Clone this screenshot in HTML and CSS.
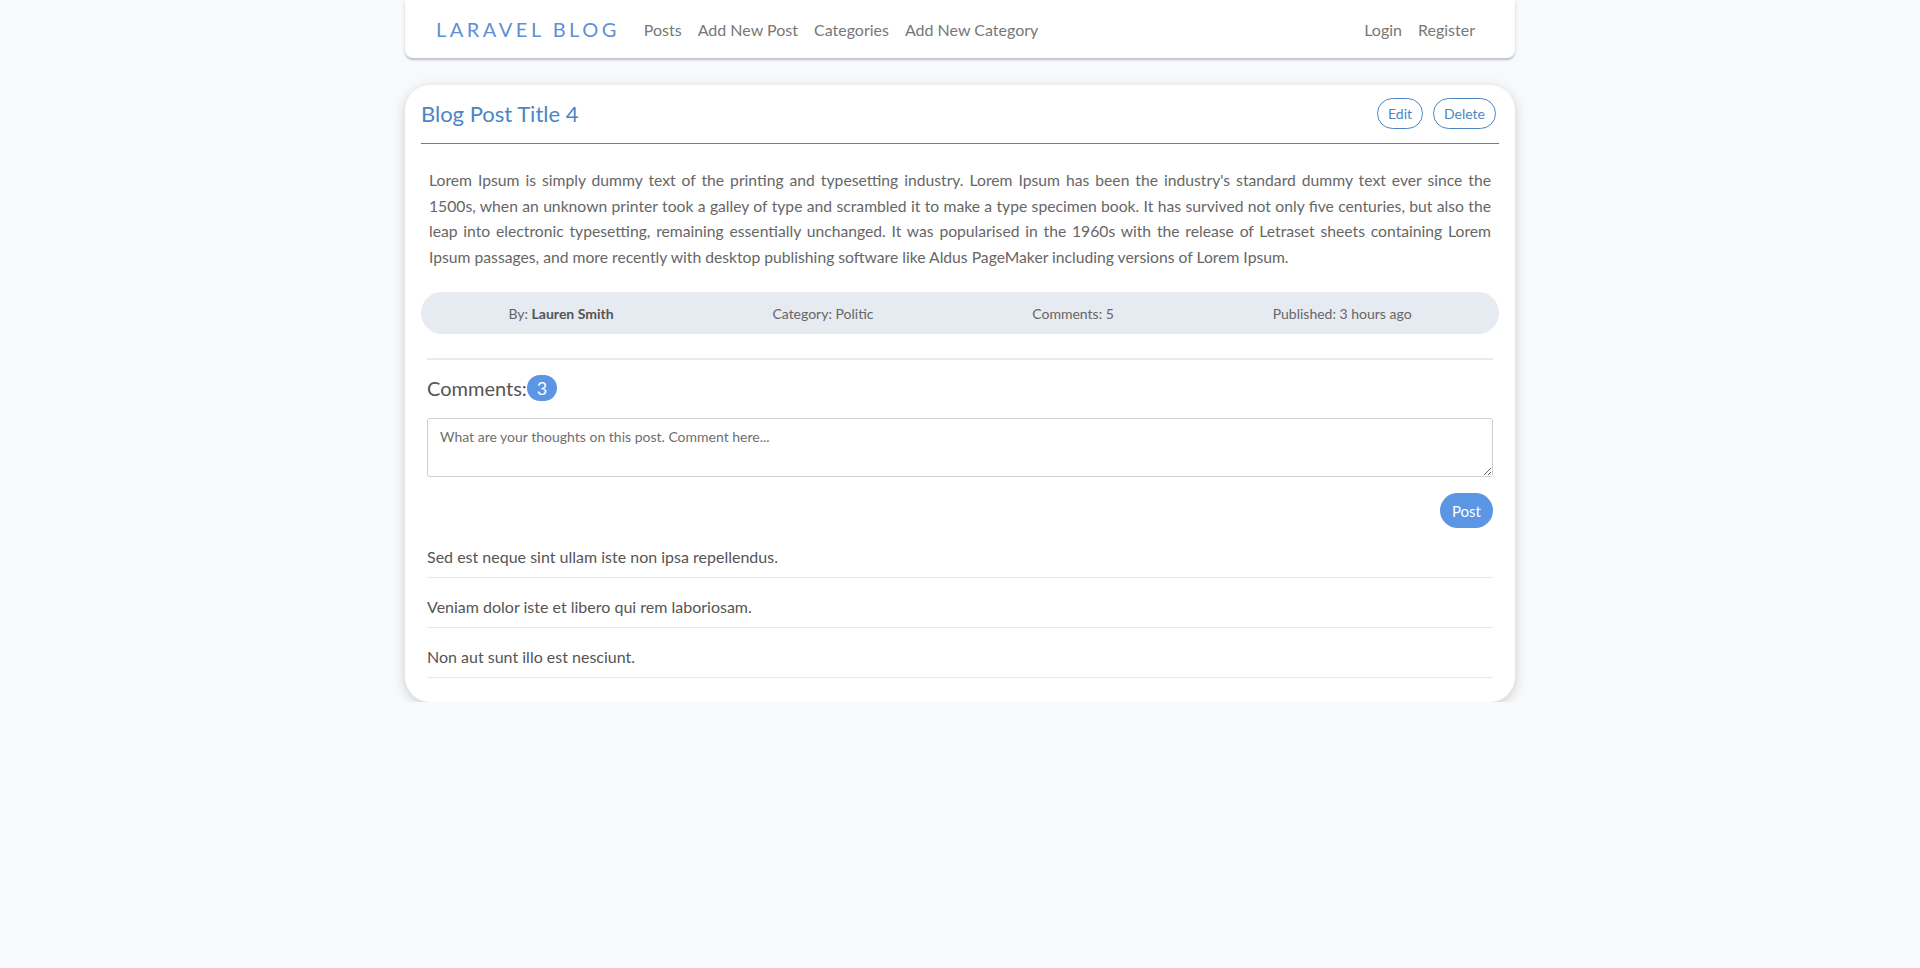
FILE: index.html
```html
<!DOCTYPE html>
<html lang="en">
<head>
<meta charset="utf-8">
<title>Laravel Blog</title>
<link rel="stylesheet" href="styles.css">
</head>
<body>
<div class="container">
  <nav class="navbar">
    <a class="brand" href="#">LARAVEL BLOG</a>
    <ul class="nav">
      <li><a href="#">Posts</a></li>
      <li><a href="#">Add New Post</a></li>
      <li><a href="#">Categories</a></li>
      <li><a href="#">Add New Category</a></li>
    </ul>
    <ul class="nav nav-right">
      <li><a href="#">Login</a></li>
      <li><a href="#">Register</a></li>
    </ul>
  </nav>

  <article class="card">
    <header class="card-header">
      <h1 class="post-title">Blog Post Title 4</h1>
      <div class="actions">
        <button class="btn-outline">Edit</button>
        <button class="btn-outline">Delete</button>
      </div>
    </header>
    <p class="post-body">Lorem Ipsum is simply dummy text of the printing and typesetting industry. Lorem Ipsum has been the industry's standard dummy text ever since the 1500s, when an unknown printer took a galley of type and scrambled it to make a type specimen book. It has survived not only five centuries, but also the leap into electronic typesetting, remaining essentially unchanged. It was popularised in the 1960s with the release of Letraset sheets containing Lorem Ipsum passages, and more recently with desktop publishing software like Aldus PageMaker including versions of Lorem Ipsum.</p>
    <div class="meta">
      <span>By: <strong>Lauren Smith</strong></span>
      <span>Category: Politic</span>
      <span>Comments: 5</span>
      <span>Published: 3 hours ago</span>
    </div>
    <section class="comments">
      <hr class="divider">
      <h2 class="comments-title">Comments: <span class="badge">3</span></h2>
      <textarea class="comment-input" placeholder="What are your thoughts on this post. Comment here..."></textarea>
      <div class="form-actions">
        <button class="btn-primary">Post</button>
      </div>
      <ul class="comment-list">
        <li>Sed est neque sint ullam iste non ipsa repellendus.</li>
        <li>Veniam dolor iste et libero qui rem laboriosam.</li>
        <li>Non aut sunt illo est nesciunt.</li>
      </ul>
    </section>
  </article>
</div>
</body>
</html>
```

FILE: styles.css
```css
* { box-sizing: border-box; }

body {
  margin: 0;
  background: #f8f9fb;
  font-family: Lato, "Open Sans", Arial, sans-serif;
  color: #555;
}

.container {
  width: 1110px;
  margin: 0 auto;
}

.navbar {
  height: 58px;
  background: #fff;
  display: flex;
  align-items: center;
  padding: 0 32px 0 31px;
  border-radius: 0 0 8px 8px;
  box-shadow: 0 2px 2px rgba(140, 150, 180, 0.55), 0 0 6px rgba(0, 0, 0, 0.04);
}

.brand {
  color: #5f8fd6;
  font-size: 20px;
  letter-spacing: 3.5px;
  text-decoration: none;
  margin-right: 16px;
}

.nav {
  list-style: none;
  margin: 0;
  padding: 0;
  display: flex;
}

.nav a {
  display: block;
  padding: 0 8px;
  color: #777;
  font-size: 16px;
  text-decoration: none;
}

.nav-right { margin-left: auto; }

.card {
  margin-top: 27px;
  background: #fff;
  border-radius: 25px;
  padding: 0 16px 24px;
  box-shadow: 0 3px 12px rgba(0, 0, 0, 0.18);
}

.card-header {
  display: flex;
  align-items: center;
  justify-content: space-between;
  padding: 13px 3px 14px 0;
  border-bottom: 1px solid #4a86c5;
}

.post-title {
  margin: 0;
  font-size: 22px;
  font-weight: 400;
  color: #4a86c5;
}

.actions {
  display: flex;
  gap: 10px;
}

.btn-outline {
  height: 31px;
  padding: 0 10px;
  border: 1px solid #4a86c5;
  border-radius: 16px;
  background: #fff;
  color: #4a86c5;
  font-family: Lato, Arial, sans-serif;
  font-size: 14px;
}

.post-body {
  margin: 24px 8px 22px;
  font-size: 15.7px;
  line-height: 25.6px;
  color: #666;
  text-align: justify;
}

.meta {
  height: 42px;
  background: #e6eaf1;
  border-radius: 21px;
  display: flex;
  align-items: center;
  justify-content: space-around;
  padding: 0 8px;
  font-size: 14px;
  color: #666;
}

.meta strong { color: #555; }

.comments {
  padding: 0 6px 0 6px;
}

.divider {
  margin: 24px 0 0;
  border: 0;
  border-top: 2px solid #eaebed;
}

.comments-title {
  margin: 15px 0 0;
  font-size: 20px;
  font-weight: 400;
  color: #555;
  line-height: 26px;
  display: flex;
  align-items: center;
  gap: 0;
}

.badge {
  display: inline-flex;
  align-items: center;
  justify-content: center;
  height: 26px;
  min-width: 30px;
  padding: 0 10px;
  border-radius: 13px;
  background: #5b95e3;
  color: #fff;
  font-size: 18px;
  font-weight: 400;
}

.comment-input {
  display: block;
  width: 100%;
  height: 59px;
  margin-top: 17px;
  padding: 9px 12px;
  border: 1px solid #cfcfcf;
  border-radius: 3px;
  font-family: Lato, Arial, sans-serif;
  font-size: 14px;
  color: #555;
  resize: vertical;
}

.comment-input::placeholder { color: #6f6f6f; }

.form-actions {
  display: flex;
  justify-content: flex-end;
  margin-top: 16px;
}

.btn-primary {
  height: 35px;
  width: 53px;
  padding: 0;
  border: 0;
  border-radius: 18px;
  background: #5a96e3;
  color: #fff;
  font-family: Lato, Arial, sans-serif;
  font-size: 15px;
}

.comment-list {
  list-style: none;
  margin: 0;
  padding: 0;
}

.comment-list li {
  padding: 18px 0 10px;
  line-height: 21px;
  font-size: 16px;
  color: #555;
  border-bottom: 1px solid #e8e9eb;
}
```
